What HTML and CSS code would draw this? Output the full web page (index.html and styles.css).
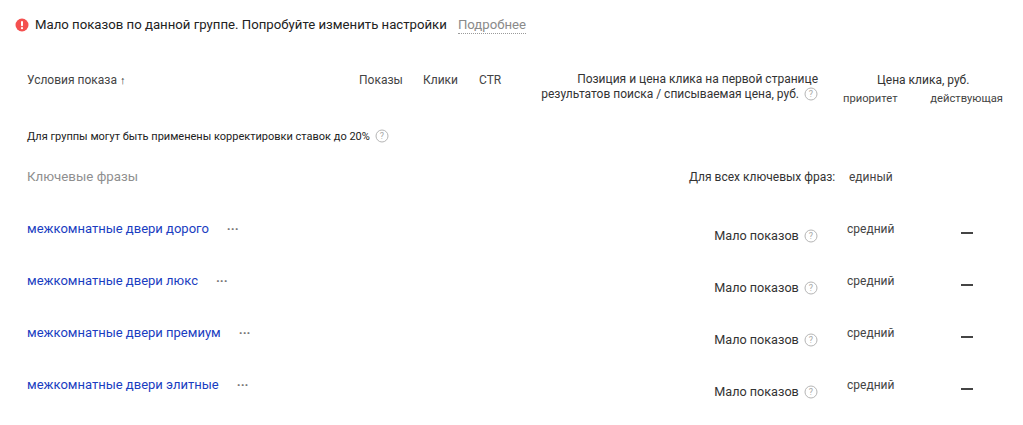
FILE: index.html
```html
<!DOCTYPE html>
<html lang="ru">
<head>
    <meta charset="UTF-8">
    <title>Условия показа</title>
    <link rel="stylesheet" href="styles.css">
</head>
<body>
    <!-- предупреждение -->
    <div class="alert">
        <svg class="alert-icon" width="14" height="14" viewBox="0 0 14 14">
            <circle cx="7" cy="7" r="6.5" fill="#f4504f"/>
            <rect x="6" y="3" width="2" height="5.2" rx="1" fill="#fff"/>
            <circle cx="7" cy="10.2" r="1.1" fill="#fff"/>
        </svg>
        <span class="alert-text">Мало показов по данной группе. Попробуйте изменить настройки</span>
        <a class="alert-more">Подробнее</a>
    </div>

    <!-- шапка таблицы -->
    <div class="table-head">
        <div class="head-name">Условия показа <span class="sort">↑</span></div>
        <div class="head-shows">Показы</div>
        <div class="head-clicks">Клики</div>
        <div class="head-ctr">CTR</div>
        <div class="head-position">
            Позиция и цена клика на первой странице<br>
            результатов поиска / списываемая цена, руб.
            <svg class="hint" width="14" height="14" viewBox="0 0 14 14"><circle cx="7" cy="7" r="6" fill="none" stroke="#b5b5b5"/><text x="7" y="10" text-anchor="middle" class="hint-mark">?</text></svg>
        </div>
        <div class="head-price">
            <div class="price-title">Цена клика, руб.</div>
            <div class="price-sub">
                <span>приоритет</span>
                <span>действующая</span>
            </div>
        </div>
    </div>

    <div class="group-note">
        Для группы могут быть применены корректировки ставок до 20%
        <svg class="hint" width="14" height="14" viewBox="0 0 14 14"><circle cx="7" cy="7" r="6" fill="none" stroke="#b5b5b5"/><text x="7" y="10" text-anchor="middle" class="hint-mark">?</text></svg>
    </div>

    <div class="phrases-head">
        <div class="phrases-title">Ключевые фразы</div>
        <div class="phrases-all">Для всех ключевых фраз:</div>
        <div class="phrases-mode">единый</div>
    </div>

    <!-- ключевые фразы -->
    <div class="row">
        <div class="phrase"><a>межкомнатные двери дорого</a><span class="dots">···</span></div>
        <div class="status">Мало показов <svg class="hint" width="14" height="14" viewBox="0 0 14 14"><circle cx="7" cy="7" r="6" fill="none" stroke="#b5b5b5"/><text x="7" y="10" text-anchor="middle" class="hint-mark">?</text></svg></div>
        <div class="priority">средний</div>
        <div class="current"><span class="dash"></span></div>
    </div>
    <div class="row">
        <div class="phrase"><a>межкомнатные двери люкс</a><span class="dots">···</span></div>
        <div class="status">Мало показов <svg class="hint" width="14" height="14" viewBox="0 0 14 14"><circle cx="7" cy="7" r="6" fill="none" stroke="#b5b5b5"/><text x="7" y="10" text-anchor="middle" class="hint-mark">?</text></svg></div>
        <div class="priority">средний</div>
        <div class="current"><span class="dash"></span></div>
    </div>
    <div class="row">
        <div class="phrase"><a>межкомнатные двери премиум</a><span class="dots">···</span></div>
        <div class="status">Мало показов <svg class="hint" width="14" height="14" viewBox="0 0 14 14"><circle cx="7" cy="7" r="6" fill="none" stroke="#b5b5b5"/><text x="7" y="10" text-anchor="middle" class="hint-mark">?</text></svg></div>
        <div class="priority">средний</div>
        <div class="current"><span class="dash"></span></div>
    </div>
    <div class="row">
        <div class="phrase"><a>межкомнатные двери элитные</a><span class="dots">···</span></div>
        <div class="status">Мало показов <svg class="hint" width="14" height="14" viewBox="0 0 14 14"><circle cx="7" cy="7" r="6" fill="none" stroke="#b5b5b5"/><text x="7" y="10" text-anchor="middle" class="hint-mark">?</text></svg></div>
        <div class="priority">средний</div>
        <div class="current"><span class="dash"></span></div>
    </div>
</body>
</html>
```

FILE: styles.css
```css
* {
    margin: 0;
    padding: 0;
    box-sizing: border-box;
}

html, body {
    width: 100%;
    height: 100%;
    overflow: hidden;
}

body {
    background-color: #ffffff;
    color: #333333;
    font-family: Roboto, 'Noto Sans', sans-serif;
    font-size: 12px;
    line-height: 16px;
}

.hint {
    vertical-align: -3px;
    margin-left: 2px;
}

.hint-mark {
    font-size: 9px;
    fill: #a8a8a8;
}

/* предупреждение */
.alert {
    display: flex;
    align-items: center;
    height: 18px;
    margin-top: 16px;
    padding-left: 15px;
    font-size: 13.2px;
}

.alert-icon {
    margin-right: 6px;
}

.alert-text {
    color: #222222;
}

.alert-more {
    margin-left: 11px;
    color: #8a8a8a;
    border-bottom: 1px dotted #9a9a9a;
}

/* шапка таблицы */
.table-head {
    display: flex;
    align-items: flex-start;
    height: 55px;
    margin-top: 38px;
    padding-left: 27px;
    color: #444444;
}

.head-name {
    width: 332px;
}

.sort {
    font-size: 11px;
    font-weight: 700;
    color: #333333;
}

.head-shows {
    width: 64px;
}

.head-clicks {
    width: 56px;
}

.head-ctr {
    width: 40px;
}

.head-position {
    width: 299px;
    text-align: right;
    line-height: 15px;
    color: #333333;
}

.head-price {
    margin-left: 25px;
    width: 160px;
}

.price-title {
    padding-left: 34px;
    color: #333333;
}

.price-sub {
    display: flex;
    justify-content: space-between;
    margin-top: 3px;
    font-size: 11.2px;
}

.group-note {
    margin-top: 2px;
    padding-left: 27px;
    font-size: 11px;
    color: #222222;
}

.phrases-head {
    display: flex;
    align-items: center;
    height: 20px;
    margin-top: 22px;
    padding-left: 27px;
}

.phrases-title {
    width: 662px;
    color: #8f8f8f;
    font-size: 13.3px;
}

.phrases-all {
    width: 160px;
    color: #333333;
}

.phrases-mode {
    color: #444444;
}

/* строки */
.row {
    display: flex;
    height: 52px;
    padding-left: 27px;
    align-items: flex-start;
}

.phrases-head + .row {
    margin-top: 33px;
}

.phrase {
    width: 560px;
    padding-top: 1px;
    font-size: 13px;
    color: #1a3dc1;
}

.dots {
    margin-left: 18px;
    color: #777777;
    font-weight: 700;
}

.status {
    width: 231px;
    padding-top: 8px;
    text-align: right;
    font-size: 12.65px;
    color: #333333;
}

.priority {
    margin-left: 29px;
    width: 100px;
    padding-top: 1px;
    color: #444444;
}

.current {
    padding-top: 9px;
    margin-left: 14px;
}

.dash {
    display: block;
    width: 12px;
    height: 2px;
    margin-top: 3px;
    background-color: #444444;
}
```
